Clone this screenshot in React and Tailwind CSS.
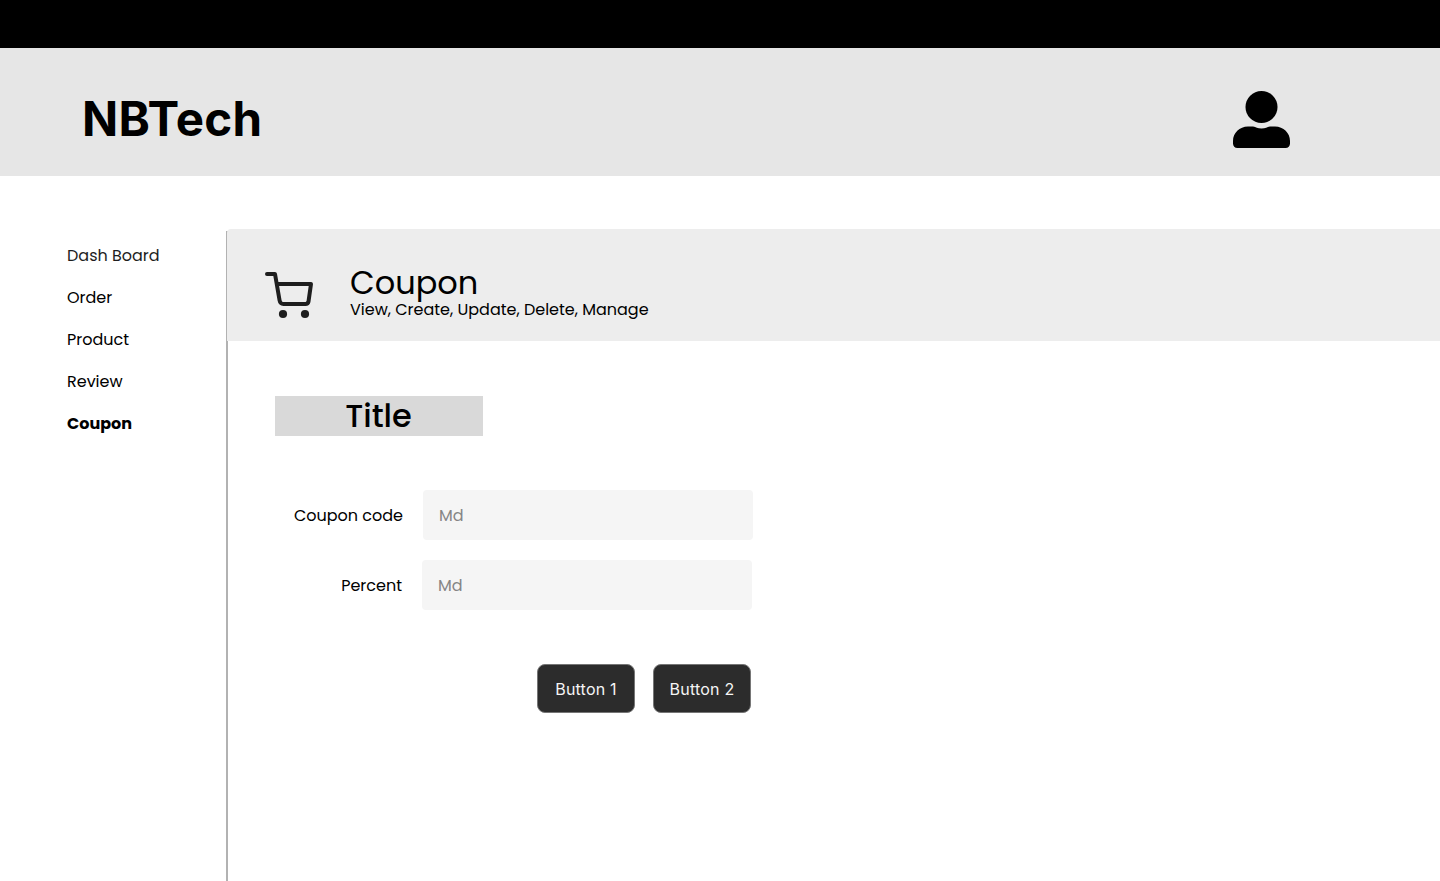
import React from "react";

const NAV = [
  { label: "Dash Board", style: "text-[#1e1e1e]" },
  { label: "Order", style: "" },
  { label: "Product", style: "" },
  { label: "Review", style: "" },
  { label: "Coupon", style: "font-bold" },
];

function UserIcon() {
  return (
    <svg className="h-[57px] w-[57px]" viewBox="0 0 57 57" aria-hidden="true">
      <circle cx="28.5" cy="16" r="16" />
      <path d="M15 35.500H20C23 36 24.500 37.500 28.500 37.500S34 36 37 35.500H42C50.500 35.500 57 42 57 50V52.500C57 55.200 55.200 57 52.500 57H4.500C1.800 57 0 55.200 0 52.500V50C0 42 6.500 35.500 15 35.500Z" />
    </svg>
  );
}

function CartIcon() {
  return (
    <svg className="h-[48px] w-[50px]" viewBox="0 0 50 48" fill="none" aria-hidden="true">
      <path
        d="M2 3H10L14.600 29.500Q15.200 33 18.500 33H40.500Q43 33 43.500 30.500L46 13H12"
        stroke="#1e1e1e"
        strokeWidth="4"
        strokeLinecap="round"
        strokeLinejoin="round"
      />
      <circle cx="18" cy="43" r="4.100" fill="#1e1e1e" />
      <circle cx="40" cy="43" r="4.100" fill="#1e1e1e" />
    </svg>
  );
}

function Field({ label, className }) {
  return (
    <label className={`flex h-[50px] items-center justify-end gap-5 ${className}`}>
      <span className="pt-0.5 leading-6">{label}</span>
      <input
        placeholder="Md"
        className="h-[50px] w-[330px] rounded bg-[#f5f5f5] px-4 outline-none placeholder:text-[#858585]"
      />
    </label>
  );
}

function Button({ children }) {
  return (
    <button className="h-[49px] w-[98px] rounded-lg border border-[#767676] bg-[#2c2c2c] text-base font-[380] tracking-[0.2px] text-[#f5f5f5]">
      {children}
    </button>
  );
}

export default function App() {
  return (
    <div className="flex h-[881px] w-full flex-col overflow-hidden bg-white font-['Poppins','Inter',sans-serif] text-base text-black antialiased">
      <div className="h-12 shrink-0 bg-black" />
      <header className="flex h-32 shrink-0 items-center justify-between bg-[#e6e6e6] pr-[150px] pl-[82px]">
        <h1 className="pt-3.5 font-['Inter',sans-serif] text-[47.5px] leading-[60px] font-bold tracking-[0.25px]">NBTech</h1>
        <div className="pt-[15px]">
          <UserIcon />
        </div>
      </header>
      <div className="flex min-h-0 flex-1 pt-[53px]">
        <nav className="flex w-[226px] shrink-0 flex-col gap-[18px] pt-[15px] pl-[67px]">
          {NAV.map(({ label, style }) => (
            <a key={label} className={`leading-6 ${style}`}>
              {label}
            </a>
          ))}
        </nav>
        <div className="mt-0.5 w-0.5 shrink-0 bg-[#b2b2b2]" />
        <main className="-ml-px min-w-0 flex-1">
          <section className="flex h-28 rounded-tl-sm bg-[#ededed] pt-[42px] pl-[38px]">
            <CartIcon />
            <div className="ml-[35px] -mt-[7px]">
              <h2 className="text-[32px] leading-[38px]">Coupon</h2>
              <p className="leading-4">View, Create, Update, Delete, Manage</p>
            </div>
          </section>
          <div className="flex flex-col pt-[55px] pl-12">
            <div className="flex h-10 w-52 items-center justify-center bg-[#d9d9d9] pr-px">
              <h3 className="text-[32px] leading-10 font-medium">Title</h3>
            </div>
            <div className="mt-[54px] flex flex-col gap-5">
              <Field label="Coupon code" className="w-[478px]" />
              <Field label="Percent" className="w-[477px]" />
            </div>
            <div className="mt-[54px] flex w-[476px] justify-end gap-[18px] font-['Inter',sans-serif]">
              <Button>Button 1</Button>
              <Button>Button 2</Button>
            </div>
          </div>
        </main>
      </div>
    </div>
  );
}
